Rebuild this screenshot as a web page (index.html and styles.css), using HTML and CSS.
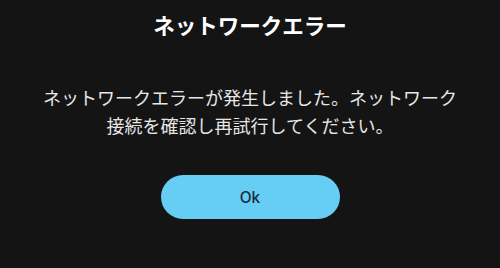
FILE: index.html
```html
<!DOCTYPE html>
<html lang="ja">
<head>
<meta charset="utf-8">
<link rel="stylesheet" href="styles.css">
</head>
<body>
<div class="dialog">
  <h1 class="title">ネットワークエラー</h1>
  <p class="message">ネットワークエラーが発生しました。ネットワーク<br>接続を確認し再試行してください。</p>
  <button class="ok">Ok</button>
</div>
</body>
</html>
```
FILE: styles.css
```css
html, body {
  margin: 0;
  padding: 0;
  background: #141414;
  width: 500px;
  height: 268px;
  overflow: hidden;
}
.dialog {
  display: flex;
  flex-direction: column;
  align-items: center;
  font-family: "Noto Sans CJK JP", "Noto Sans", sans-serif;
}
.title {
  margin: 10px 0 0;
  font-size: 21.5px;
  line-height: 30px;
  font-weight: 700;
  color: #ffffff;
}
.message {
  margin: 43px 0 0;
  font-size: 18px;
  line-height: 28px;
  color: #e6e6e6;
  text-align: center;
}
.ok {
  margin-top: 36px;
  width: 179px;
  height: 44px;
  border: none;
  border-radius: 22px;
  background: #66cdf5;
  color: #1b2a38;
  font-family: "Inter", "Noto Sans", sans-serif;
  font-size: 15.5px;
  font-weight: 500;
}
```
